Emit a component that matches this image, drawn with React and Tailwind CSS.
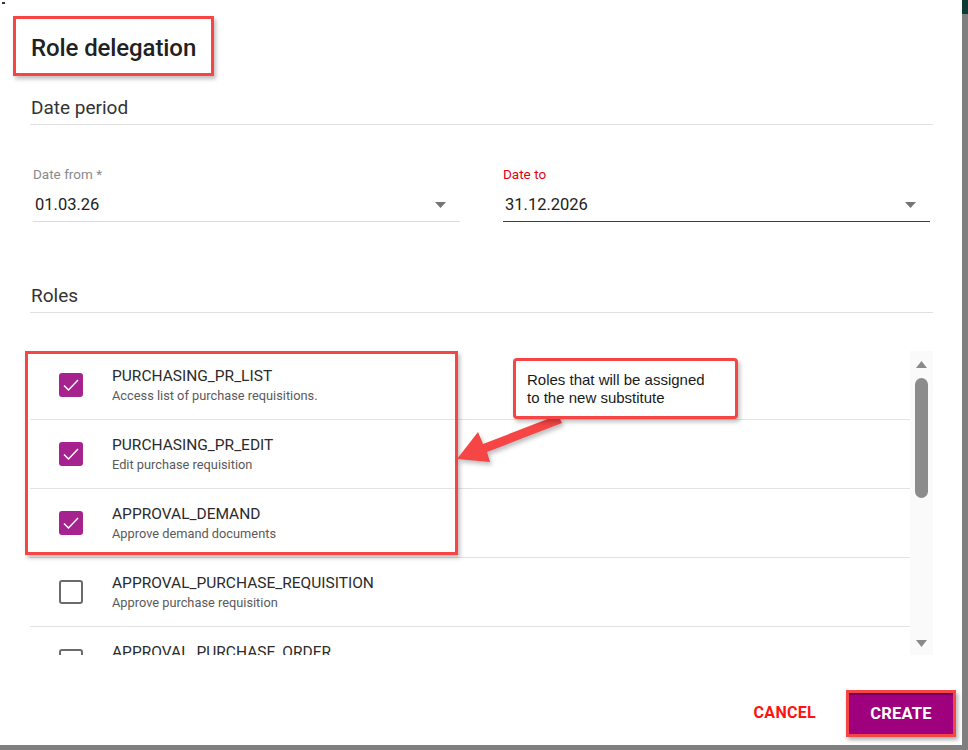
import React from 'react';

const roles = [
  { code: 'PURCHASING_PR_LIST', desc: 'Access list of purchase requisitions.', checked: true },
  { code: 'PURCHASING_PR_EDIT', desc: 'Edit purchase requisition', checked: true },
  { code: 'APPROVAL_DEMAND', desc: 'Approve demand documents', checked: true },
  { code: 'APPROVAL_PURCHASE_REQUISITION', desc: 'Approve purchase requisition', checked: false },
  { code: 'APPROVAL_PURCHASE_ORDER', desc: 'Approve purchase order', checked: false },
];

function Caret({ className = '' }) {
  return (
    <svg width="11" height="6" viewBox="0 0 11 6" className={className}>
      <path d="M0 0 L11 0 L5.5 6 Z" fill="#757575" />
    </svg>
  );
}

function Checkbox({ checked }) {
  if (checked) {
    return (
      <div className="w-[24px] h-[24px] rounded-[3px] bg-[#a6238f] flex items-center justify-center shrink-0">
        <svg width="24" height="24" viewBox="0 0 24 24">
          <path d="M5 12.5 L9.5 17 L19 7" fill="none" stroke="#fff" strokeWidth="1.5" />
        </svg>
      </div>
    );
  }
  return <div className="w-[24px] h-[24px] rounded-[3px] border-2 border-[#6b6b6b] shrink-0" />;
}

function DateField({ label, value, active }) {
  return (
    <div className="flex-1 flex flex-col">
      <span className={`text-[13.5px] leading-[16px] ${active ? 'text-[#e3000f]' : 'text-[#8a8a8a]'}`}>
        {label}
      </span>
      <div
        className={`mt-[7px] h-[33px] flex items-center justify-between pl-[2px] pr-[14px] border-b ${
          active ? 'border-[#d40000]' : 'border-[#dcdcdc]'
        }`}
      >
        <span className="text-[16.5px] text-[#212121]">{value}</span>
        <Caret />
      </div>
    </div>
  );
}

export default function App() {
  return (
    <div className="relative w-[968px] h-[750px] bg-[#7f7f7f] overflow-hidden" style={{ fontFamily: 'Roboto, "Noto Sans", sans-serif' }}>
      {/* corner of the app bar behind the backdrop */}
      <div className="absolute right-0 top-0 w-[6px] h-[14px] bg-[#0f3b36]" />

      <div className="relative w-[962px] h-[745px] bg-white flex flex-col">
        <div className="absolute left-[2px] top-[2px] w-[3px] h-[2px] bg-[#333]" />

        {/* header */}
        <div className="ml-[13px] mt-[16px] w-[201px] h-[60px] border-[3px] border-[#f54545] shadow-[2px_3px_4px_rgba(0,0,0,0.25)] flex items-center pl-[15px] pt-[3px]">
          <h1 className="text-[24px] font-medium text-[#212121] tracking-[-0.1px]">Role delegation</h1>
        </div>

        <div className="ml-[30px] w-[903px] flex flex-col">
          <div className="mt-[21px] h-[28px] border-b border-[#e0e0e0] pl-[1px] text-[19px] leading-[22px] text-[#333]">
            Date period
          </div>

          <div className="mt-[41px] flex gap-[43px] pl-[3px] pr-[3px]">
            <DateField label="Date from *" value="01.03.26" />
            <DateField label="Date to" value="31.12.2026" active />
          </div>

          <div className="mt-[63px] h-[28px] border-b border-[#e0e0e0] pl-[1px] text-[19px] leading-[22px] text-[#333]">
            Roles
          </div>

          {/* roles list with scrollbar */}
          <div className="relative mt-[38px] h-[304px] flex overflow-hidden">
            <div className="flex-1 flex flex-col">
              {roles.map((r) => (
                <div key={r.code} className="h-[69px] shrink-0 border-b border-[#e3e3e3] flex items-center pl-[29px] gap-[29px]">
                  <Checkbox checked={r.checked} />
                  <div className="flex flex-col">
                    <span className="text-[15.5px] leading-[20px] text-[#2b2b2b]">{r.code}</span>
                    <span className="mt-[2px] text-[12.8px] leading-[16px] text-[#5a5a5a]">{r.desc}</span>
                  </div>
                </div>
              ))}
            </div>
            <div className="w-[23px] bg-[#fafafa] flex flex-col items-center pt-[10px] pb-[8px]">
              <svg width="11" height="7" viewBox="0 0 11 7">
                <path d="M0 7 L11 7 L5.5 0 Z" fill="#8a8a8a" />
              </svg>
              <div className="mt-[10px] w-[13px] h-[120px] rounded-full bg-[#8c8c8c]" />
              <div className="flex-1" />
              <svg width="11" height="7" viewBox="0 0 11 7">
                <path d="M0 0 L11 0 L5.5 7 Z" fill="#8a8a8a" />
              </svg>
            </div>
          </div>
        </div>

        {/* footer actions */}
        <div className="flex-1 flex items-end justify-end pr-[6px] gap-[30px] pb-[8px]">
          <span className="mb-[12px] text-[16px] font-bold text-[#ff1212] tracking-[0.3px]">CANCEL</span>
          <div className="border-[3px] border-[#f54545] shadow-[2px_3px_4px_rgba(0,0,0,0.3)]">
            <button className="w-[104px] h-[41px] bg-[#9e007e] text-white text-[16.5px] font-bold tracking-[0.2px] border-t-2 border-[#7a005f]">
              CREATE
            </button>
          </div>
        </div>

        {/* annotations */}
        <div className="absolute left-[25px] top-[351px] w-[433px] h-[204px] border-[3px] border-[#f54545] shadow-[2px_3px_4px_rgba(0,0,0,0.25)]" />
        <svg className="absolute left-0 top-0 pointer-events-none" width="962" height="745" style={{ filter: 'drop-shadow(2px 3px 2px rgba(0,0,0,0.25))' }}>
          <polygon
            points="457,459 478,432 483,444 558,415 562,423 487,452 490,462"
            fill="#f54545"
          />
        </svg>
        <div className="absolute left-[513px] top-[358px] w-[225px] h-[61px] bg-white border-[3px] border-[#f54545] rounded-[4px] shadow-[2px_3px_4px_rgba(0,0,0,0.25)] pl-[11px] pt-[10px] text-[15px] leading-[18px] text-[#1a1a1a]" style={{ fontFamily: '"Liberation Sans", Arial, sans-serif' }}>
          Roles that will be assigned
          <br />
          to the new substitute
        </div>
      </div>
    </div>
  );
}
